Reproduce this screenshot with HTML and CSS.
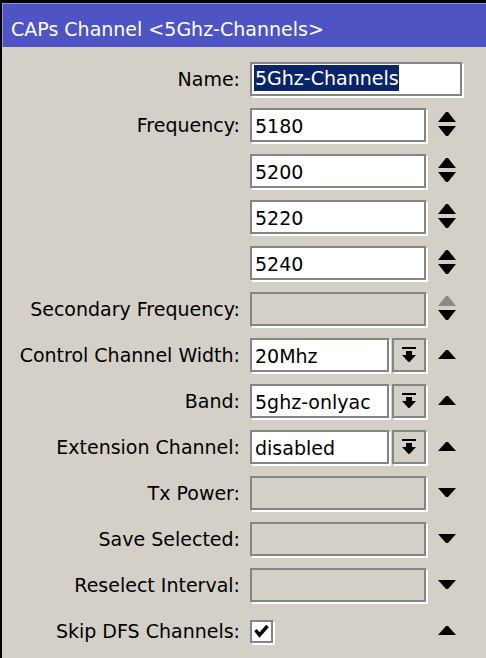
FILE: index.html
```html
<!DOCTYPE html>
<html lang="en">
<head>
    <meta charset="utf-8">
    <title>CAPs Channel</title>
    <link rel="stylesheet" href="styles.css">
</head>
<body>
<div class="window">
    <div class="titlebar">CAPs Channel &lt;5Ghz-Channels&gt;</div>

    <div class="form">
        <div class="row">
            <div class="label">Name:</div>
            <div class="field wide"><span class="sel">5Ghz-Channels</span></div>
        </div>

        <div class="row">
            <div class="label">Frequency:</div>
            <div class="field">5180</div>
            <svg class="icon" width="18" height="26" viewBox="0 0 18 26"><polygon points="8,0 10,0 18,10 0,10"/><polygon points="0,14 18,14 10,24 8,24"/></svg>
        </div>
        <div class="row">
            <div class="label"></div>
            <div class="field">5200</div>
            <svg class="icon" width="18" height="26" viewBox="0 0 18 26"><polygon points="8,0 10,0 18,10 0,10"/><polygon points="0,14 18,14 10,24 8,24"/></svg>
        </div>
        <div class="row">
            <div class="label"></div>
            <div class="field">5220</div>
            <svg class="icon" width="18" height="26" viewBox="0 0 18 26"><polygon points="8,0 10,0 18,10 0,10"/><polygon points="0,14 18,14 10,24 8,24"/></svg>
        </div>
        <div class="row">
            <div class="label"></div>
            <div class="field">5240</div>
            <svg class="icon" width="18" height="26" viewBox="0 0 18 26"><polygon points="8,0 10,0 18,10 0,10"/><polygon points="0,14 18,14 10,24 8,24"/></svg>
        </div>

        <div class="row">
            <div class="label">Secondary Frequency:</div>
            <div class="field off"></div>
            <svg class="icon" width="18" height="26" viewBox="0 0 18 26"><polygon fill="#8a8a86" points="8,0 10,0 18,10 0,10"/><polygon points="0,14 18,14 10,24 8,24"/></svg>
        </div>

        <div class="row">
            <div class="label">Control Channel Width:</div>
            <div class="combo">
                <div class="field">20Mhz</div>
                <div class="drop"><svg width="14" height="16" viewBox="0 0 14 16"><rect x="0" y="0" width="14" height="2"/><rect x="4" y="4" width="6" height="4"/><polygon points="0,8 14,8 7.5,15 6.5,15"/></svg></div>
            </div>
            <svg class="icon" width="18" height="10" viewBox="0 0 18 10"><polygon points="8,0 10,0 18,9 0,9"/></svg>
        </div>
        <div class="row">
            <div class="label">Band:</div>
            <div class="combo">
                <div class="field">5ghz-onlyac</div>
                <div class="drop"><svg width="14" height="16" viewBox="0 0 14 16"><rect x="0" y="0" width="14" height="2"/><rect x="4" y="4" width="6" height="4"/><polygon points="0,8 14,8 7.5,15 6.5,15"/></svg></div>
            </div>
            <svg class="icon" width="18" height="10" viewBox="0 0 18 10"><polygon points="8,0 10,0 18,9 0,9"/></svg>
        </div>
        <div class="row">
            <div class="label">Extension Channel:</div>
            <div class="combo">
                <div class="field">disabled</div>
                <div class="drop"><svg width="14" height="16" viewBox="0 0 14 16"><rect x="0" y="0" width="14" height="2"/><rect x="4" y="4" width="6" height="4"/><polygon points="0,8 14,8 7.5,15 6.5,15"/></svg></div>
            </div>
            <svg class="icon" width="18" height="10" viewBox="0 0 18 10"><polygon points="8,0 10,0 18,9 0,9"/></svg>
        </div>

        <div class="row">
            <div class="label">Tx Power:</div>
            <div class="field off"></div>
            <svg class="icon" width="18" height="10" viewBox="0 0 18 10"><polygon points="0,0 18,0 10,9 8,9"/></svg>
        </div>
        <div class="row">
            <div class="label">Save Selected:</div>
            <div class="field off"></div>
            <svg class="icon" width="18" height="10" viewBox="0 0 18 10"><polygon points="0,0 18,0 10,9 8,9"/></svg>
        </div>
        <div class="row">
            <div class="label">Reselect Interval:</div>
            <div class="field off"></div>
            <svg class="icon" width="18" height="10" viewBox="0 0 18 10"><polygon points="0,0 18,0 10,9 8,9"/></svg>
        </div>

        <div class="row">
            <div class="label">Skip DFS Channels:</div>
            <div class="check-area">
                <div class="check"><svg width="15" height="14" viewBox="0 0 15 14"><polyline points="1.5,6 5.5,11 13.5,2" fill="none" stroke="#000" stroke-width="3.4"/></svg></div>
            </div>
            <svg class="icon" width="18" height="10" viewBox="0 0 18 10"><polygon points="8,0 10,0 18,9 0,9"/></svg>
        </div>
    </div>
</div>
</body>
</html>
```

FILE: styles.css
```css
html, body {
    margin: 0;
    padding: 0;
    background-color: #d4d0c8;
}

.window {
    min-height: 658px;
    border-top: 3px solid #000;
    border-left: 2px solid #000;
    background-color: #d4d0c8;
    font-family: "DejaVu Sans", Verdana, sans-serif;
    font-size: 19px;
    color: #000;
    box-sizing: border-box;
}

.titlebar {
    box-sizing: border-box;
    height: 44px;
    padding: 14px 0 0 8px;
    line-height: 22px;
    background-color: #4e54c4;
    border-top: 1px solid #8b8fda;
    border-left: 1px solid #8b8fda;
    color: #fff;
    white-space: nowrap;
}

.form {
    padding-top: 15px;
}

.row {
    display: flex;
    align-items: center;
    height: 34px;
    margin-bottom: 12px;
}

.label {
    width: 248px;
    padding-right: 10px;
    box-sizing: border-box;
    text-align: right;
    line-height: 35px;
    white-space: nowrap;
    flex: none;
}

.field {
    box-sizing: border-box;
    width: 176px;
    height: 34px;
    border: 2px solid #858585;
    background-color: #fff;
    box-shadow: 2px 2px 0 #fff;
    padding-left: 3px;
    line-height: 32px;
    white-space: nowrap;
    overflow: hidden;
    flex: none;
}

.field.wide {
    width: 212px;
    padding-left: 2px;
}

.field.off {
    background-color: #d4d0c8;
}

.sel {
    display: inline-block;
    background-color: #0a246a;
    color: #fff;
    line-height: 26px;
    margin-top: 1px;
    padding-left: 1px;
    vertical-align: top;
}

.combo {
    display: flex;
    width: 176px;
    flex: none;
}

.combo .field {
    width: 139px;
}

.drop {
    box-sizing: border-box;
    width: 34px;
    height: 34px;
    margin-left: 3px;
    border: 2px solid #858585;
    box-shadow: 2px 2px 0 #fff;
    display: flex;
    align-items: center;
    justify-content: center;
}

.check-area {
    width: 176px;
    flex: none;
}

.check {
    box-sizing: border-box;
    width: 23px;
    height: 23px;
    border: 2px solid #858585;
    background-color: #fff;
    box-shadow: 2px 2px 0 #fff;
    display: flex;
    align-items: center;
    justify-content: center;
}

.icon {
    margin-left: 12px;
    flex: none;
    fill: #000;
}
```
